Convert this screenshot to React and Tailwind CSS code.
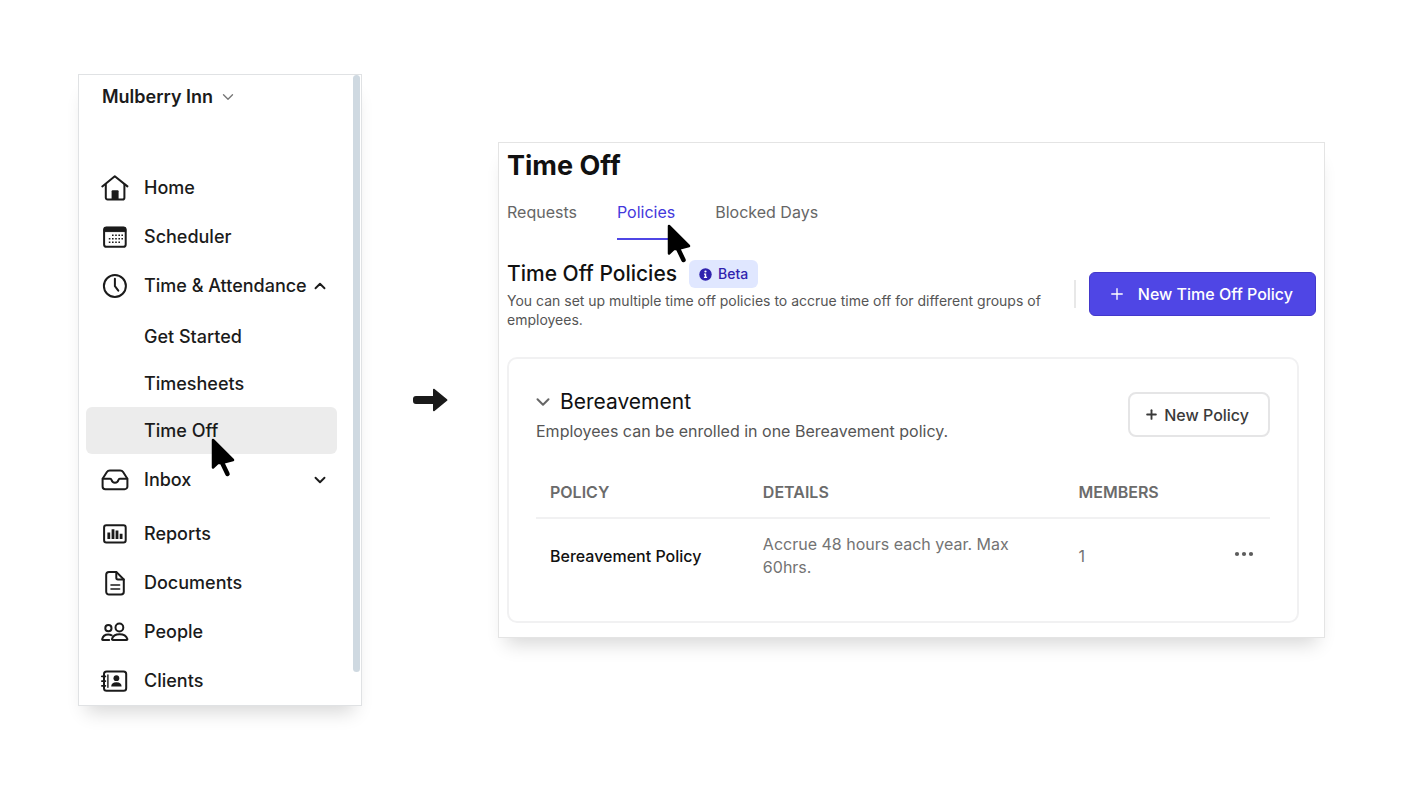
import { ChevronDown, ChevronUp, Plus } from 'lucide-react';

const iconProps = {
  width: 28,
  height: 28,
  viewBox: '0 0 28 28',
  fill: 'none',
  stroke: 'currentColor',
  strokeWidth: 2,
  strokeLinecap: 'round',
  strokeLinejoin: 'round',
  'aria-hidden': true,
};

const HomeIcon = () => (
  <svg {...iconProps}>
    <path d="M1.3 12.4 13.8 2.2l12.6 10.2" />
    <path d="M4.8 10.5v13.2a1.8 1.8 0 0 0 1.8 1.8h15a1.8 1.8 0 0 0 1.8-1.8V10.5" />
    <path d="M10.6 25.5v-8.2a1 1 0 0 1 1-1h5a1 1 0 0 1 1 1v8.2z" fill="currentColor" stroke="none" />
  </svg>
);

const SchedulerIcon = () => (
  <svg {...iconProps}>
    <rect x="3.1" y="4.4" width="21.6" height="19.4" rx="2.4" />
    <path d="M3.1 8.2V6.4a2 2 0 0 1 2-2h17.6a2 2 0 0 1 2 2v1.8z" fill="currentColor" strokeWidth="1" />
    <g fill="currentColor" stroke="none">
      <path d="M11 11.4h1.6V13H11zM14.200 11.400h1.600V13h-1.600zM17.400 11.400H19V13h-1.600zM20.400 11.400H22V13h-1.600z" />
      <path d="M7.800 14.900h1.600v1.600H7.800zM11 14.900h1.600v1.600H11zM14.200 14.900h1.600v1.600h-1.600zM17.400 14.900H19v1.600h-1.600zM20.400 14.900H22v1.600h-1.600z" />
      <path d="M7.800 18.400h1.600V20H7.800zM11 18.400h1.600V20H11zM14.200 18.400h1.600V20h-1.600zM17.400 18.400H19V20h-1.600z" />
    </g>
  </svg>
);

const ClockIcon = () => (
  <svg {...iconProps}>
    <circle cx="13.9" cy="14" r="11" />
    <path d="M13.9 6.8v7.4l3.4 4.4" />
  </svg>
);

const InboxIcon = () => (
  <svg {...iconProps}>
    <path d="M1.600 12.800 5.900 6a3.400 3.400 0 0 1 2.900-1.600h10.400A3.400 3.400 0 0 1 22.100 6l4.300 6.800v7.600a2.800 2.800 0 0 1-2.800 2.800H4.400a2.800 2.800 0 0 1-2.800-2.800z" />
    <path d="M1.800 12.800h7.400c.8 0 1.200.7 1.400 1.300a3.500 3.500 0 0 0 6.800 0c.2-.6.6-1.300 1.400-1.300h7.400" />
  </svg>
);

const ReportsIcon = () => (
  <svg {...iconProps}>
    <rect x="3.1" y="5.3" width="21.6" height="17.2" rx="2.2" />
    <path d="M7.800 12.600v6.500M12 9.300v9.800M16 10.600v8.500M20.100 13.800v5.300" strokeWidth="2.800" strokeLinecap="butt" />
  </svg>
);

const DocumentsIcon = () => (
  <svg {...iconProps}>
    <path d="M15.3 2.9H8a2.8 2.8 0 0 0-2.8 2.8v17a2.8 2.8 0 0 0 2.8 2.8h12a2.8 2.8 0 0 0 2.8-2.8V10.5z" />
    <path d="M15.3 3.2v5.6a1.6 1.6 0 0 0 1.6 1.6h5.8" />
    <path d="M10 16h8.6M10 20h8.6" strokeWidth="1.6" />
  </svg>
);

const PeopleIcon = () => (
  <svg {...iconProps}>
    <circle cx="7.400" cy="10.200" r="3.100" />
    <circle cx="18.400" cy="9.500" r="3.900" />
    <path d="M8.200 22H1.800c-.5 0-.7-.4-.6-.9.7-3 3-4.700 6-4.700 1.300 0 2.500.300 3.500.9" />
    <path d="M11.900 22h13.600c.7 0 1-.5.8-1.100-1-3-4-4.600-7.700-4.600s-6.700 1.600-7.600 4.600c-.2.600.2 1.100.9 1.100z" />
  </svg>
);

const ClientsIcon = () => (
  <svg {...iconProps}>
    <rect x="3" y="4.400" width="22.200" height="19.400" rx="2.600" />
    <path d="M6.900 8v12.200" strokeWidth="1.4" />
    <path d="M.8 9.400h3.600M.8 14.100h3.600M.8 18.800h3.600" strokeWidth="1.700" />
    <circle cx="15.400" cy="11.200" r="2.900" fill="currentColor" stroke="none" />
    <path d="M10.200 19.400c0-2.400 1.600-4.200 5.200-4.200s5.200 1.800 5.200 4.200z" fill="currentColor" stroke="none" />
  </svg>
);

const CursorIcon = ({ className }) => (
  <svg width="24" height="40" viewBox="0 0 24 40" className={`pointer-events-none absolute z-10 ${className}`} aria-hidden="true">
    <path d="M2 2v27.500l5-4.600h4.500L22 22z" stroke="#000" strokeWidth="2.500" strokeLinejoin="round" />
    <path d="M10.500 23.500 16.500 36" stroke="#000" strokeWidth="4.500" strokeLinecap="round" />
  </svg>
);

const InfoIcon = () => (
  <svg width="13" height="13" viewBox="0 0 13 13" aria-hidden="true">
    <circle cx="6.500" cy="6.500" r="6.200" fill="#3023ae" />
    <circle cx="6.500" cy="3.500" r="1.100" fill="#fff" />
    <path d="M5 5.600h2.200v3.200h.9v1.200H4.900V8.800h.9v-2H5z" fill="#fff" />
  </svg>
);

const timeLinks = [
  { label: 'Get Started' },
  { label: 'Timesheets' },
  { label: 'Time Off', active: true },
];

const tabs = [
  { label: 'Requests' },
  { label: 'Policies', active: true },
  { label: 'Blocked Days' },
];

const policies = [
  { name: 'Bereavement Policy', details: 'Accrue 48 hours each year. Max 60hrs.', members: 1 },
];

const NavItem = ({ icon: Icon, label, children }) => (
  <a href="#" className="flex h-[49px] items-center pl-[15px] pr-2">
    <Icon />
    <span className="ml-[15px] whitespace-nowrap">{label}</span>
    {children}
  </a>
);

const Sidebar = () => (
  <aside className="flex w-[284px] shrink-0 border border-[#e0e2e4] bg-white shadow-[0_14px_18px_-8px_rgba(0,0,0,0.16)]">
    <div className="min-w-0 flex-1 pl-[7px] pr-4 pt-2">
      <button type="button" className="flex h-7 items-center gap-[6px] pl-4 text-lg font-semibold">
        Mulberry Inn
        <ChevronDown size={18} strokeWidth={1.8} className="text-[#777]" />
      </button>

      <nav className="mt-[52px] text-lg font-medium">
        <NavItem icon={HomeIcon} label="Home" />
        <NavItem icon={SchedulerIcon} label="Scheduler" />
        <NavItem icon={ClockIcon} label="Time & Attendance">
          <ChevronUp size={18} strokeWidth={2.5} className="ml-auto shrink-0" />
        </NavItem>
        <ul className="mb-px mt-[3px]">
          {timeLinks.map((link) => (
            <li key={link.label}>
              <a
                href="#"
                className={`flex h-[47px] items-center rounded-md pl-[58px] ${link.active ? 'bg-[#ececec]' : ''}`}
              >
                <span className="relative">
                  {link.label}
                  {link.active && <CursorIcon className="left-[67px] top-[21px]" />}
                </span>
              </a>
            </li>
          ))}
        </ul>
        <NavItem icon={InboxIcon} label="Inbox">
          <ChevronDown size={18} strokeWidth={2.5} className="ml-auto shrink-0" />
        </NavItem>
        <div className="mt-[5px]">
          <NavItem icon={ReportsIcon} label="Reports" />
          <NavItem icon={DocumentsIcon} label="Documents" />
          <NavItem icon={PeopleIcon} label="People" />
          <NavItem icon={ClientsIcon} label="Clients" />
        </div>
      </nav>
    </div>
    <div className="mb-[33px] mr-px w-[7px] shrink-0 rounded-full bg-[#cfd9e1]" />
  </aside>
);

const PolicyGroup = () => (
  <section className="mr-[17px] mt-7 rounded-[10px] border-2 border-[#f1f1f2] px-[27px] pb-[29px] pt-[33px]">
    <div className="flex items-start justify-between">
      <div>
        <button type="button" className="-ml-1 flex h-5 items-center gap-[6px] text-[21px] leading-5 text-[#111]">
          <ChevronDown size={22} strokeWidth={2.2} className="text-[#666]" />
          Bereavement
        </button>
        <p className="mt-[7px] text-base text-[#555]">Employees can be enrolled in one Bereavement policy.</p>
      </div>
      <button
        type="button"
        className="flex h-[45px] items-center gap-[5px] rounded-lg border-2 border-[#e5e5e6] pl-[14px] pr-[19px] text-base font-medium text-[#3a3a3a]"
      >
        <Plus size={15} strokeWidth={3} />
        New Policy
      </button>
    </div>

    <table className="mt-[23px] w-full table-fixed text-left text-base">
      <thead className="border-b-2 border-[#f1f1f2] text-[#6b6b6b]">
        <tr className="h-[52px]">
          <th className="w-[29%] pl-[14px] font-semibold">POLICY</th>
          <th className="w-[43%] pl-[14px] font-semibold">DETAILS</th>
          <th className="pl-[14px] font-semibold">MEMBERS</th>
          <th className="w-[60px]" aria-label="Actions" />
        </tr>
      </thead>
      <tbody className="text-[#737373]">
        {policies.map((policy) => (
          <tr key={policy.name} className="h-[74px]">
            <td className="pl-[14px] font-medium text-[#111]">{policy.name}</td>
            <td className="pl-[14px] pr-11 leading-[23px]">{policy.details}</td>
            <td className="pl-[14px]">{policy.members}</td>
            <td className="pb-1 pr-4">
              <button type="button" aria-label="Policy actions" className="ml-auto block">
                <svg width="20" height="6" viewBox="0 0 20 6" fill="#5c5c5c" aria-hidden="true">
                  <circle cx="3" cy="3" r="2.100" />
                  <circle cx="10" cy="3" r="2.100" />
                  <circle cx="17" cy="3" r="2.100" />
                </svg>
              </button>
            </td>
          </tr>
        ))}
      </tbody>
    </table>
  </section>
);

const TimeOffPanel = () => (
  <main className="min-w-0 flex-1 border border-[#e4e4e4] bg-white pb-[14px] pl-2 pr-2 pt-[7px] shadow-[0_14px_18px_-8px_rgba(0,0,0,0.16)]">
    <h1 className="text-[27px] font-bold leading-8 text-[#111]">Time Off</h1>

    <nav className="mt-4 flex gap-10 text-base text-[#666]">
      {tabs.map((tab) => (
        <a
          key={tab.label}
          href="#"
          className={`relative border-b-2 pb-[14px] pt-[2px] ${
            tab.active ? 'border-[#4f46e5] text-[#4338dc]' : 'border-transparent'
          }`}
        >
          {tab.label}
          {tab.active && <CursorIcon className="left-[50px] top-[26px]" />}
        </a>
      ))}
    </nav>

    <div className="mt-5 flex items-start">
      <div className="min-w-0 flex-1 pr-6">
        <div className="flex items-center gap-3">
          <h2 className="text-[21px] font-medium leading-7 text-[#111]">Time Off Policies</h2>
          <span className="flex h-7 items-center gap-[6px] rounded-md bg-[#e0e7ff] px-[10px] text-sm font-medium text-[#3023ae]">
            <InfoIcon />
            Beta
          </span>
        </div>
        <p className="mt-[3px] text-sm leading-[19px] text-[#555]">
          You can set up multiple time off policies to accrue time off for different groups of employees.
        </p>
      </div>
      <div className="mt-3 flex shrink-0 items-center gap-[13px]">
        <div className="h-7 w-0.5 bg-[#e8e8e8]" />
        <button
          type="button"
          className="flex h-11 items-center gap-3 rounded-md border border-[#4338ca] bg-[#4f46e5] pl-[18px] pr-[22px] text-base font-medium text-white"
        >
          <Plus size={18} strokeWidth={1.800} />
          New Time Off Policy
        </button>
      </div>
    </div>

    <PolicyGroup />
  </main>
);

const App = () => (
  <div className="flex min-h-screen items-center bg-white px-[78px] pb-5 font-['Inter',sans-serif] text-[#1b1b1b]">
    <Sidebar />
    <svg width="36" height="24" viewBox="0 0 36 24" className="mx-[50px] mt-5 shrink-0" fill="#1a1a1a" aria-hidden="true">
      <path d="M4 8h17V1.500c0-.8.900-1 1.500-.5l12.500 10.200c.6.500.6 1.100 0 1.600L22.500 23c-.6.500-1.500.300-1.500-.5V16H4a3 3 0 0 1-3-3v-2a3 3 0 0 1 3-3z" />
    </svg>
    <TimeOffPanel />
  </div>
);

export default App;
